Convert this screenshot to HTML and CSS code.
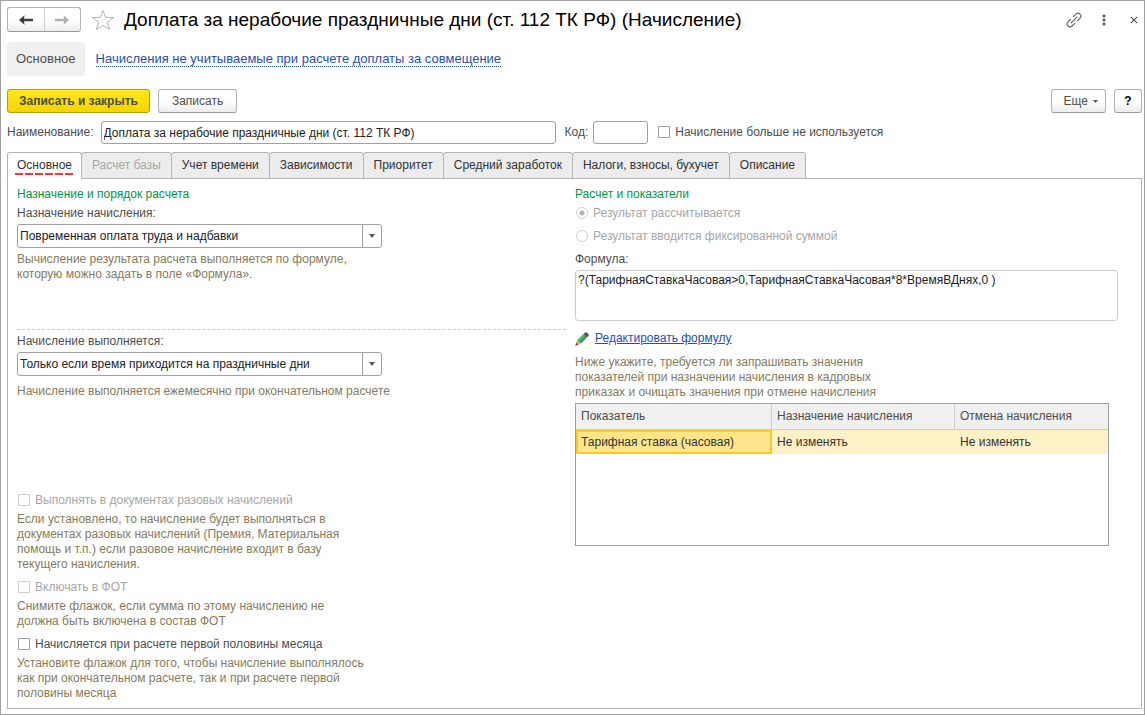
FILE: index.html
```html
<!DOCTYPE html>
<html lang="ru">
<head>
<meta charset="utf-8">
<title>Доплата за нерабочие праздничные дни (ст. 112 ТК РФ) (Начисление)</title>
<link rel="stylesheet" href="styles.css">
</head>
<body>
<div class="window">
  <header class="titlebar">
    <div class="nav-buttons">
      <button class="nav-button" type="button" aria-label="Назад">
        <svg width="14" height="10" viewBox="0 0 14 10"><path d="M0 5 5.500 .3 5 3.800H14V6.200H5L5.500 9.700Z" fill="#3c3c3c"/></svg>
      </button>
      <button class="nav-button" type="button" aria-label="Вперед">
        <svg width="14" height="10" viewBox="0 0 14 10"><path d="M14 5 8.500 .3 9 3.800H0V6.200H9L8.500 9.700Z" fill="#b0b0b0"/></svg>
      </button>
    </div>
    <button class="icon-button star" type="button" aria-label="Добавить в избранное">
      <svg width="24" height="22" viewBox="0 0 24 22"><path d="M12 1.500 14.700 8.300 22.500 8.500 16.400 13.200 18.600 20.500 12 16.300 5.400 20.500 7.600 13.200 1.500 8.500 9.300 8.300Z" fill="none" stroke="#aab2bd"/></svg>
    </button>
    <h1 class="title">Доплата за нерабочие праздничные дни (ст. 112 ТК РФ) (Начисление)</h1>
    <div class="window-tools">
      <button class="icon-button tool" type="button" aria-label="Получить ссылку">
        <svg width="16" height="16" viewBox="0 0 16 16" fill="none" stroke="#666" stroke-width="1.200" stroke-linecap="round"><path d="M5.200 10.800 10.800 5.200M7.300 4.700 9.900 2.100C11 1 12.600 .8 13.800 1.900 15.200 3.100 15.200 4.900 14 6.100L11.700 8.500M4.300 7.500 2 9.900C.8 11.100 .8 12.800 2 14 3.200 15.200 5 15.200 6.100 14L8.700 11.300"/></svg>
      </button>
      <button class="icon-button tool" type="button" aria-label="Меню">
        <svg width="4" height="12" viewBox="0 0 4 12" fill="#555"><circle cx="2" cy="2" r="1.500"/><circle cx="2" cy="6" r="1.500"/><circle cx="2" cy="10" r="1.500"/></svg>
      </button>
      <button class="icon-button tool" type="button" aria-label="Закрыть">
        <svg width="8" height="8" viewBox="0 0 8 8"><path d="M.8 .8 7.200 7.200M7.200 .8 .8 7.200" stroke="#555" stroke-width="1.200"/></svg>
      </button>
    </div>
  </header>

  <nav class="sections">
    <span class="section-current">Основное</span>
    <a class="section-link" href="#excluded">Начисления не учитываемые при расчете доплаты за совмещение</a>
  </nav>

  <div class="commands">
    <button class="button button-primary" type="button">Записать и закрыть</button>
    <button class="button" type="button">Записать</button>
    <button class="button button-more" type="button">Еще
      <svg width="5" height="3" viewBox="0 0 5 3"><path d="M0 0H5L2.500 3Z" fill="#555"/></svg>
    </button>
    <button class="button button-help" type="button" aria-label="Справка">?</button>
  </div>

  <div class="fields">
    <label class="label" for="name">Наименование:</label>
    <input class="input input-name" id="name" type="text" value="Доплата за нерабочие праздничные дни (ст. 112 ТК РФ)">
    <label class="label label-code" for="code">Код:</label>
    <input class="input input-code" id="code" type="text">
    <label class="check check-unused"><input class="tick" type="checkbox">Начисление больше не используется</label>
  </div>

  <div class="tabs" role="tablist">
    <button class="tab tab-active" type="button" role="tab" aria-selected="true"><span class="tab-text">Основное</span></button>
    <button class="tab" type="button" role="tab" disabled>Расчет базы</button>
    <button class="tab" type="button" role="tab">Учет времени</button>
    <button class="tab" type="button" role="tab">Зависимости</button>
    <button class="tab" type="button" role="tab">Приоритет</button>
    <button class="tab" type="button" role="tab">Средний заработок</button>
    <button class="tab" type="button" role="tab">Налоги, взносы, бухучет</button>
    <button class="tab" type="button" role="tab">Описание</button>
  </div>

  <main class="panel">
    <div class="column">
      <section class="group group-purpose">
        <h2 class="heading">Назначение и порядок расчета</h2>
        <label class="label" for="purpose">Назначение начисления:</label>
        <div class="combo">
          <select class="combo-select" id="purpose"><option>Повременная оплата труда и надбавки</option></select>
          <span class="combo-arrow"><svg width="6" height="4" viewBox="0 0 6 4"><path d="M0 0H6L3 4Z" fill="#555"/></svg></span>
        </div>
        <p class="hint">Вычисление результата расчета выполняется по формуле,<br>которую можно задать в поле «Формула».</p>
      </section>
      <section class="group group-mode">
        <label class="label" for="mode">Начисление выполняется:</label>
        <div class="combo">
          <select class="combo-select" id="mode"><option>Только если время приходится на праздничные дни</option></select>
          <span class="combo-arrow"><svg width="6" height="4" viewBox="0 0 6 4"><path d="M0 0H6L3 4Z" fill="#555"/></svg></span>
        </div>
        <p class="hint hint-mode">Начисление выполняется ежемесячно при окончательном расчете</p>
      </section>
      <section class="options">
        <div class="group">
          <label class="check check-disabled"><input class="tick" type="checkbox" disabled>Выполнять в документах разовых начислений</label>
          <p class="hint">Если установлено, то начисление будет выполняться в<br>документах разовых начислений (Премия, Материальная<br>помощь и т.п.) если разовое начисление входит в базу<br>текущего начисления.</p>
        </div>
        <div class="group">
          <label class="check check-disabled"><input class="tick" type="checkbox" disabled>Включать в ФОТ</label>
          <p class="hint">Снимите флажок, если сумма по этому начислению не<br>должна быть включена в состав ФОТ</p>
        </div>
        <div class="group">
          <label class="check"><input class="tick" type="checkbox">Начисляется при расчете первой половины месяца</label>
          <p class="hint">Установите флажок для того, чтобы начисление выполнялось<br>как при окончательном расчете, так и при расчете первой<br>половины месяца</p>
        </div>
      </section>
    </div>

    <div class="column">
      <h2 class="heading">Расчет и показатели</h2>
      <div class="radios">
        <label class="check check-disabled"><input class="tick tick-radio" type="radio" name="result" checked disabled>Результат рассчитывается</label>
        <label class="check check-disabled"><input class="tick tick-radio" type="radio" name="result" disabled>Результат вводится фиксированной суммой</label>
      </div>
      <label class="label" for="formula">Формула:</label>
      <textarea class="formula" id="formula" readonly>?(ТарифнаяСтавкаЧасовая&gt;0,ТарифнаяСтавкаЧасовая*8*ВремяВДнях,0 )</textarea>
      <div class="edit">
        <svg width="14" height="14" viewBox="0 0 14 14"><path d="M.3 13.700 1.500 10.200 3.800 12.600Z" fill="#4a4a4a"/><path d="M1.300 10.700 2.500 8 6 11.500 3.300 12.700Z" fill="#e5a352"/><path d="M2.500 8 8.500 2 12 5.500 6 11.500Z" fill="#3c9c58"/><path d="M2.500 8 8.500 2 10 3.500 4 9.500Z" fill="#5cb872"/><path d="M8.500 2 9.800 .8C10.600 .1 11.400 .1 12.100 .8L13.200 1.900C13.900 2.600 13.900 3.400 13.200 4.200L12 5.500Z" fill="#4b5568"/></svg>
        <a class="edit-link" href="#formula">Редактировать формулу</a>
      </div>
      <p class="hint hint-table">Ниже укажите, требуется ли запрашивать значения<br>показателей при назначении начисления в кадровых<br>приказах и очищать значения при отмене начисления</p>
      <div class="grid-box">
        <table class="grid">
          <thead><tr><th class="col-name">Показатель</th><th class="col-assign">Назначение начисления</th><th>Отмена начисления</th></tr></thead>
          <tbody><tr><td class="cell-current">Тарифная ставка (часовая)</td><td>Не изменять</td><td>Не изменять</td></tr></tbody>
        </table>
      </div>
    </div>
  </main>
</div>
</body>
</html>
```
FILE: styles.css
```css
* { box-sizing: border-box; }

body {
  margin: 0;
  background: #fff;
  color: #4d4d4d;
  font: 12px/15px "Liberation Sans", Arial, sans-serif;
}

button, input, select, textarea { font: inherit; color: inherit; }
h1, h2, p { margin: 0; font-weight: normal; }
svg { display: block; flex: none; }

.window {
  display: flex;
  flex-direction: column;
  min-height: 100vh;
  padding: 6px 2px 5px 6px;
  border: 1px solid #a0a0a0;
}

.titlebar { display: flex; align-items: center; height: 25px; }
.nav-buttons {
  display: flex;
  width: 74px;
  height: 25px;
  border: 1px solid #b3b3b3;
  border-bottom-color: #999;
  border-radius: 3px;
  background: linear-gradient(#fff 50%, #ededed);
}
.nav-button {
  display: flex;
  flex: 1;
  align-items: center;
  justify-content: center;
  padding: 0;
  border: 0;
  background: none;
}
.nav-button + .nav-button { border-left: 1px solid #ccc; }
.icon-button { padding: 0; border: 0; background: none; }
.star { margin-left: 10px; }
.title { margin-left: 9px; color: #000; font-size: 19px; line-height: 24px; }
.window-tools { display: flex; align-items: center; gap: 14px; margin-left: auto; }
.tool { display: flex; align-items: center; justify-content: center; width: 16px; height: 16px; }

.sections { display: flex; align-items: center; gap: 11px; margin-top: 10px; font-size: 13px; }
.section-current { padding: 10px 9px; border-radius: 3px; background: #f0f0f0; line-height: 14px; }
.section-link { color: #1f4fb0; text-decoration: none; border-bottom: 1px dotted #1f4fb0; line-height: 14px; }

.commands { display: flex; gap: 8px; margin-top: 13px; }
.button {
  height: 24px;
  padding: 0 13px;
  border: 1px solid #b3b3b3;
  border-bottom-color: #999;
  border-radius: 3px;
  background: linear-gradient(#fff 50%, #ececec);
}
.button-primary {
  padding: 0 11px;
  border-color: #b59c00;
  background: linear-gradient(#ffe81c, #f5d400);
  font-weight: bold;
}
.button-more { display: flex; align-items: center; gap: 5px; margin-left: auto; padding: 0 7px 0 12px; }
.button-help { width: 28px; padding: 0; color: #000; font-weight: bold; }

.fields { display: flex; align-items: center; margin-top: 8px; }
.input {
  height: 23px;
  padding: 0 2px;
  border: 1px solid #a0a0a0;
  border-radius: 3px;
  background: #fff;
  color: #222;
}
.input-name { width: 455px; margin-left: 7px; }
.input-code { width: 55px; margin-left: 5px; }
.label-code { margin-left: 9px; }

.check { display: flex; align-items: center; gap: 5px; height: 15px; }
.check-unused { margin-left: 9px; }
.check-disabled { color: #a6a6a6; }
.tick {
  appearance: none;
  width: 12px;
  height: 12px;
  margin: 0 0 1px 1px;
  border: 1px solid #a0a0a0;
  background: #fff;
}
.tick:disabled { border-color: #d0d0d0; }
.tick-radio { border-radius: 50%; }
.tick-radio:checked { background: radial-gradient(circle, #b0b0b0 2px, #fff 3px); }

.tabs { display: flex; position: relative; margin-top: 8px; }
.tab {
  height: 27px;
  margin-left: -1px;
  padding: 0 10px;
  border: 1px solid #b3b3b3;
  border-radius: 3px 3px 0 0;
  background: #ececec;
  color: #333;
}
.tab:disabled { color: #a6a6a6; }
.tab-active { z-index: 1; margin-left: 0; padding: 0 7px; border-bottom-color: #fff; background: #fff; }
.tab-text {
  display: block;
  padding: 0 2px;
  background: repeating-linear-gradient(90deg, #f33 0 8px, transparent 8px 10px) left bottom / 100% 2px no-repeat;
  line-height: 19px;
}

.panel {
  display: grid;
  flex: 1;
  grid-template-columns: 549fr 558fr;
  gap: 9px;
  margin-top: -1px;
  padding: 8px 8px 4px 9px;
  border: 1px solid #b3b3b3;
}

.column { display: flex; flex-direction: column; }
.group { display: flex; flex-direction: column; gap: 4px; }
.heading { color: #009646; font-size: 12px; line-height: 15px; }
.hint { color: #857b5c; }

.combo {
  display: grid;
  width: 365px;
  max-width: 100%;
  height: 24px;
  margin-top: -1px;
  border: 1px solid #a0a0a0;
  border-radius: 3px;
}
.combo-select {
  grid-area: 1 / 1;
  appearance: none;
  padding: 0 20px 0 2px;
  border: 0;
  background: none;
  color: #222;
}
.combo-arrow {
  display: flex;
  grid-area: 1 / 1;
  justify-self: end;
  align-items: center;
  justify-content: center;
  width: 19px;
  border-left: 1px solid #a0a0a0;
  pointer-events: none;
}

.group-purpose { padding-bottom: 47px; }
.group-mode { padding-top: 4px; border-top: 1px dashed #ccc; }
.hint-mode { margin-top: 4px; }
.options { display: flex; flex-direction: column; gap: 8px; margin-top: 94px; }

.radios { display: flex; flex-direction: column; gap: 8px; margin: 4px 0 8px; }
.formula {
  display: block;
  width: calc(100% - 15px);
  height: 51px;
  margin-top: 3px;
  padding: 2px;
  border: 1px solid #ccc;
  border-radius: 3px;
  background: #fff;
  color: #222;
  resize: none;
}
.edit { display: flex; align-items: center; gap: 6px; margin-top: 10px; }
.edit-link { color: #1f4fb0; }
.hint-table { margin-top: 9px; }

.grid-box {
  width: calc(100% - 24px);
  height: 143px;
  margin-top: 3px;
  border: 1px solid #a0a0a0;
}
.grid { width: 100%; border-collapse: separate; border-spacing: 0; table-layout: fixed; }
.grid th {
  height: 26px;
  padding: 0 5px;
  border-right: 1px solid #ccc;
  border-bottom: 1px solid #ccc;
  background: #f0f0f0;
  font-weight: normal;
  text-align: left;
}
.grid th:last-child { border-right: 0; }
.grid td { height: 24px; padding: 0 5px; background: #fef1c5; color: #333; }
.grid .cell-current { padding: 0 3px; border: 2px solid #f9c922; background: #fee58c; }
.col-name { width: 196px; }
.col-assign { width: 183px; }
```
